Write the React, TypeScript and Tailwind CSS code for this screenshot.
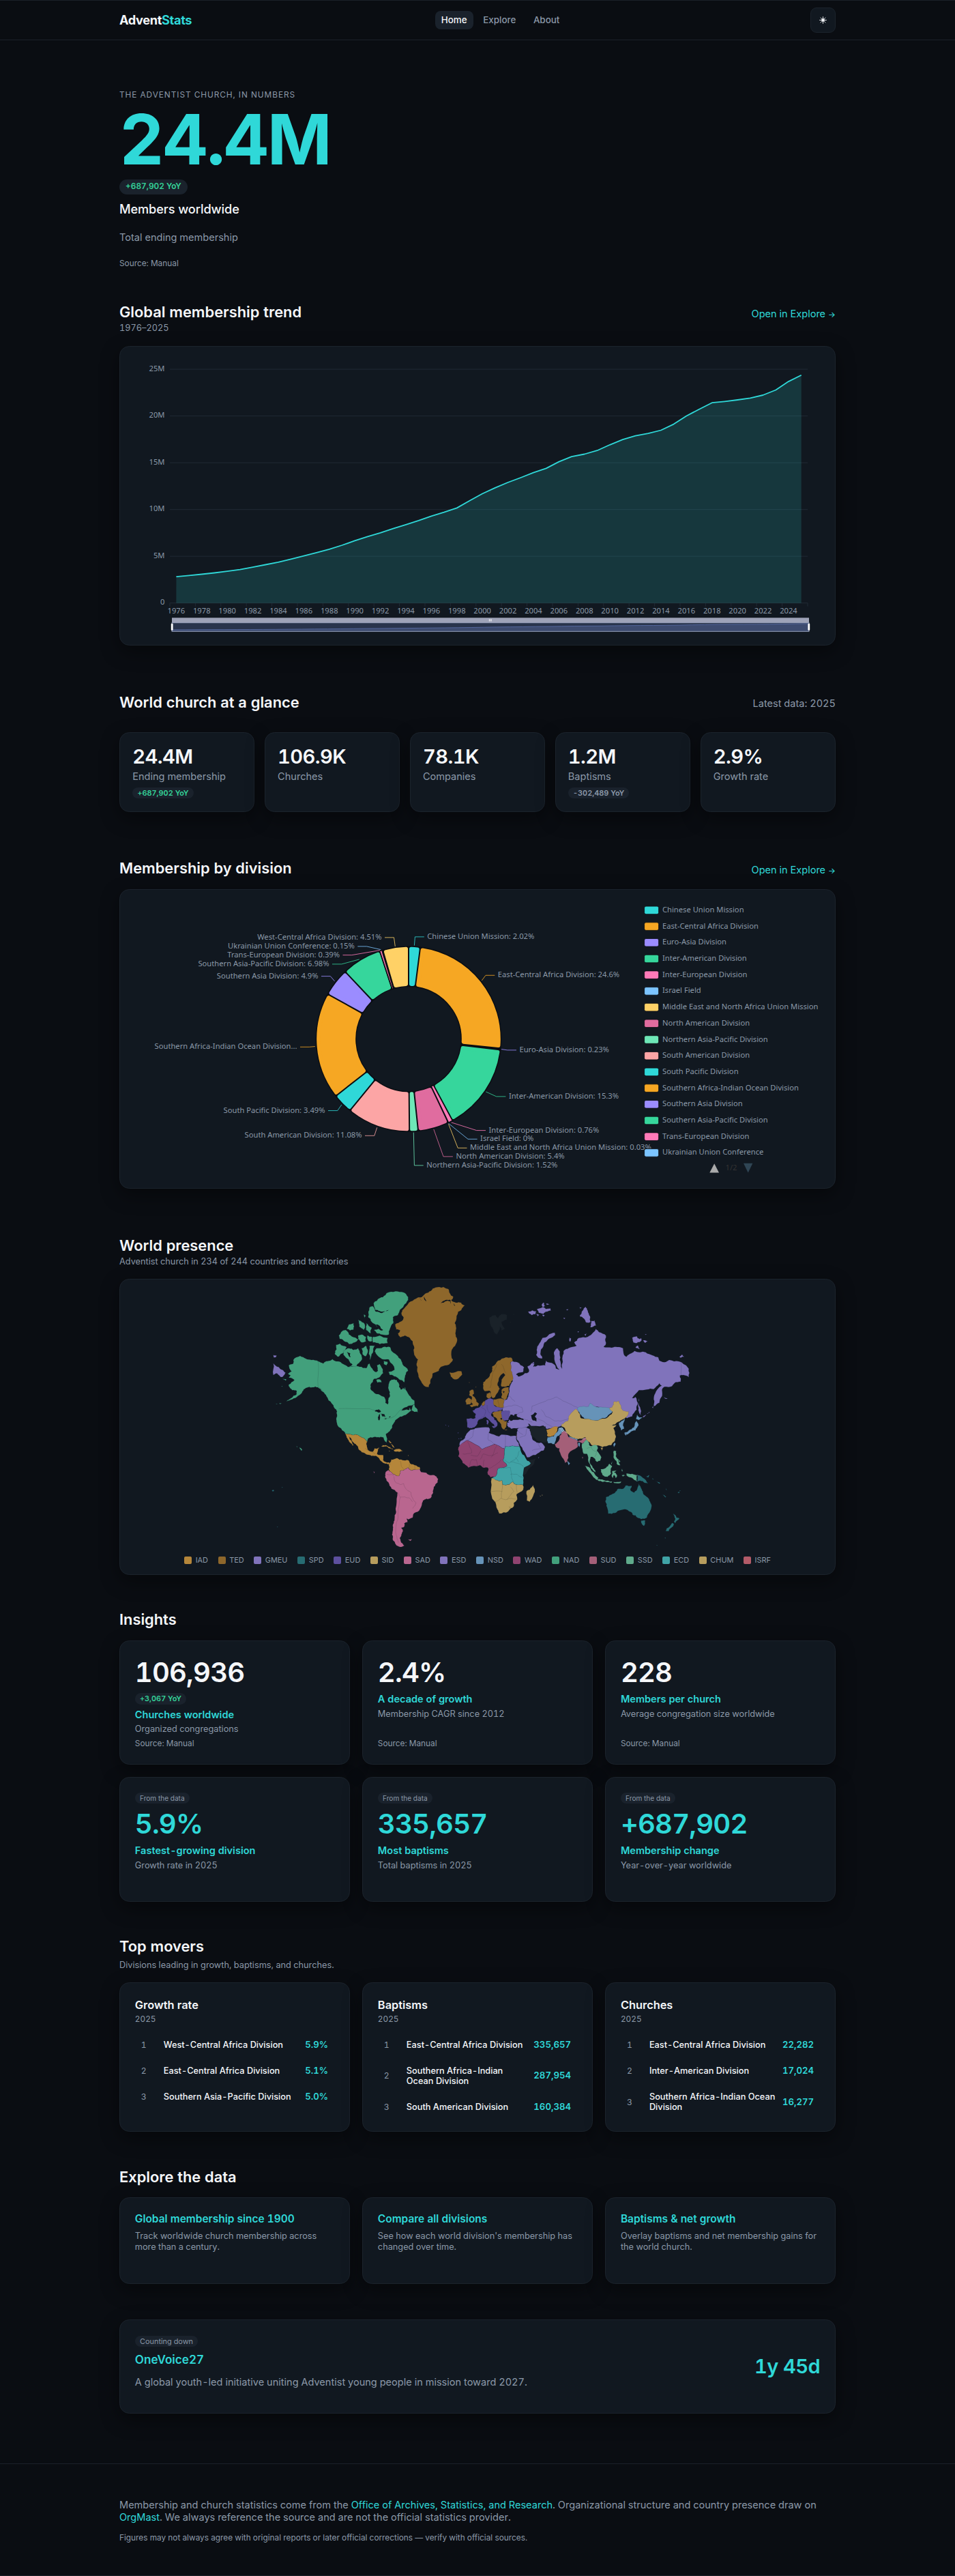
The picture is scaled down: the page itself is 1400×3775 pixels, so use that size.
import type { ReactNode } from "react";

const MUTED = "#8b98a8";

/* ---------- shared pieces ---------- */

const CARD =
  "rounded-[14.5px] border border-[#1b232c] bg-[#111820] shadow-[0_9px_28px_rgba(0,0,0,0.42)]";

function Title({ children }: { children: ReactNode }) {
  return <h2 className="h-7 text-[21.84px] leading-7 font-semibold text-[#f5f7fa]">{children}</h2>;
}

function ExploreLink() {
  return (
    <a className="text-[14.56px] leading-6 whitespace-nowrap text-[#2fd8d8]">
      Open in Explore <span className="text-[11.5px] font-medium">→</span>
    </a>
  );
}

function Delta({ text, up }: { text: string; up?: boolean }) {
  return (
    <span
      className={`inline-flex h-[16.6px] items-center self-start rounded-full bg-[#1a222c] px-[7.2px] text-[10.92px] leading-none font-semibold ${
        up ? "text-[#34d399]" : "text-[#8b98a8]"
      }`}
    >
      {text}
    </span>
  );
}

function Badge({ text, large }: { text: string; large?: boolean }) {
  return (
    <span
      className={`inline-flex h-[16.4px] items-center self-start rounded-full bg-[#1a222c] px-[7.2px] leading-none text-[#8b98a8] ${
        large ? "text-[10.92px]" : "text-[10.1px]"
      }`}
    >
      {text}
    </span>
  );
}

/* ---------- trend chart ---------- */

const MEMBERS = [
  2.82, 2.943, 3.08, 3.224, 3.39, 3.58, 3.83, 4.1, 4.37, 4.7, 5.038, 5.384, 5.757, 6.184, 6.661, 7.102, 7.498, 7.962,
  8.382, 8.812, 9.296, 9.702, 10.163, 10.939, 11.687, 12.32, 12.894, 13.406, 13.936, 14.399, 15.115, 15.66, 15.921,
  16.307, 16.923, 17.479, 17.881, 18.143, 18.479, 19.126, 20.008, 20.727, 21.414, 21.556, 21.723, 21.912, 22.234,
  22.785, 23.684, 24.37,
];
const BAND = 18.7;
const trendX = (i: number) => 249 + BAND * (i + 0.5);
const trendY = (v: number) => 884 - (v / 25) * 342.6;

function TrendChart() {
  const line = MEMBERS.map((v, i) => `${i ? "L" : "M"}${trendX(i).toFixed(1)} ${trendY(v).toFixed(1)}`).join("");
  const mini = MEMBERS.map((v, i) => `L${(252 + (934 * i) / 49).toFixed(1)} ${(924.4 - v * 0.42).toFixed(1)}`).join("");
  return (
    <svg className="-m-px block h-[439px] w-[1050px]" viewBox="175 507.3 1050 439" fontFamily="'Noto Sans', sans-serif" fontSize="11.2" fill={MUTED}>
      {[0, 5, 10, 15, 20, 25].map((v) => (
        <g key={v}>
          <line x1="249" x2="1184" y1={trendY(v)} y2={trendY(v)} stroke="#202a34" strokeWidth="1" />
          <text x="241.5" y={trendY(v) + 2.6} textAnchor="end">{v ? `${v}M` : "0"}</text>
        </g>
      ))}
      {Array.from({ length: 26 }, (_, i) => (
        <line key={i} x1={249 + i * 37.4} x2={249 + i * 37.4} y1="884" y2="889" stroke="#202a34" />
      ))}
      <path d={`${line}L${trendX(49)} 884L${trendX(0)} 884Z`} fill="#2fd8d8" fillOpacity="0.16" />
      <path d={line} fill="none" stroke="#2fd8d8" strokeWidth="1.8" strokeLinejoin="round" />
      {Array.from({ length: 25 }, (_, i) => (
        <text key={i} x={trendX(i * 2)} y="899.6" textAnchor="middle">{1976 + i * 2}</text>
      ))}
      <rect x="252" y="905.6" width="934" height="7.4" fill="#9ea3b8" />
      <path d="M717.3 907.6v3.2M718.8 907.6v3.2M720.3 907.6v3.2" stroke="#fff" strokeWidth="0.8" />
      <rect x="252" y="913" width="934" height="12.6" fill="#29344c" />
      <path d={`M252 925.4${mini}L1186 925.4Z`} fill="#3d4b6f" />
      <path d={mini.replace("L", "M")} fill="none" stroke="#53669b" strokeWidth="1" />
      <rect x="252" y="913" width="934" height="12.6" fill="none" stroke="#a4afca" strokeWidth="0.9" />
      <rect x="250.8" y="914" width="2.8" height="10" rx="1" fill="#fff" />
      <rect x="1184.4" y="914" width="2.8" height="10" rx="1" fill="#fff" />
    </svg>
  );
}

/* ---------- donut ---------- */

type Slice = {
  name: string;
  label: string;
  value: number;
  color: string;
  side: "l" | "r";
  line: [number, number][];
};

const SLICES: Slice[] = [
  { name: "Chinese Union Mission", label: "Chinese Union Mission: 2.02%", value: 2.02, color: "#2fd8d8", side: "r", line: [[607.4, 1386], [608.4, 1373.3], [621.8, 1373.3]] },
  { name: "East-Central Africa Division", label: "East-Central Africa Division: 24.6%", value: 24.6, color: "#f6a723", side: "r", line: [[706.3, 1437.3], [712, 1429.7], [725.3, 1429.7]] },
  { name: "Euro-Asia Division", label: "Euro-Asia Division: 0.23%", value: 0.23, color: "#9b8cff", side: "r", line: [[735, 1538], [743.8, 1539.3], [757, 1539.3]] },
  { name: "Inter-American Division", label: "Inter-American Division: 15.3%", value: 15.3, color: "#36d69c", side: "r", line: [[712.3, 1600.3], [727.7, 1607.3], [741.4, 1607.3]] },
  { name: "Inter-European Division", label: "Inter-European Division: 0.76%", value: 0.76, color: "#ff7ab8", side: "r", line: [[661.7, 1645.3], [698.6, 1657], [712, 1657]] },
  { name: "Israel Field", label: "Israel Field: 0%", value: 0, color: "#7cc4ff", side: "r", line: [[657.5, 1646.7], [686, 1669.7], [699.6, 1669.7]] },
  { name: "Middle East and North Africa Union Mission", label: "Middle East and North Africa Union Mission: 0.03%", value: 0.03, color: "#ffd166", side: "r", line: [[657.5, 1647.7], [671.2, 1682.7], [684.5, 1682.7]] },
  { name: "North American Division", label: "North American Division: 5.4%", value: 5.4, color: "#e06c9f", side: "r", line: [[635.8, 1655.3], [650, 1695.3], [663.9, 1695.3]] },
  { name: "Northern Asia-Pacific Division", label: "Northern Asia-Pacific Division: 1.52%", value: 1.52, color: "#6ee7b7", side: "r", line: [[606.3, 1660], [607.4, 1708.3], [620.7, 1708.3]] },
  { name: "South American Division", label: "South American Division: 11.08%", value: 11.08, color: "#fca5a5", side: "l", line: [[552.7, 1652.7], [548.8, 1664.7], [535, 1664.7]] },
  { name: "South Pacific Division", label: "South Pacific Division: 3.49%", value: 3.49, color: "#2fd8d8", side: "l", line: [[500.8, 1619.3], [494.8, 1628], [481, 1628]] },
  { name: "Southern Africa-Indian Ocean Division", label: "Southern Africa-Indian Ocean Division...", value: 18.64, color: "#f6a723", side: "l", line: [[461.8, 1534], [453.4, 1534.7], [440, 1534.7]] },
  { name: "Southern Asia Division", label: "Southern Asia Division: 4.9%", value: 4.9, color: "#9b8cff", side: "l", line: [[490.6, 1438.3], [484.3, 1431], [471, 1431]] },
  { name: "Southern Asia-Pacific Division", label: "Southern Asia-Pacific Division: 6.98%", value: 6.98, color: "#36d69c", side: "l", line: [[526.7, 1406.3], [500.8, 1413.3], [487, 1413.3]] },
  { name: "Trans-European Division", label: "Trans-European Division: 0.39%", value: 0.39, color: "#ff7ab8", side: "l", line: [[556.9, 1393], [515.8, 1400], [502.5, 1400]] },
  { name: "Ukrainian Union Conference", label: "Ukrainian Union Conference: 0.15%", value: 0.15, color: "#7cc4ff", side: "l", line: [[558.3, 1392], [537.6, 1387.3], [524.3, 1387.3]] },
  { name: "West-Central Africa Division", label: "West-Central Africa Division: 4.51%", value: 4.51, color: "#ffd166", side: "l", line: [[579.3, 1387.3], [577.5, 1374.3], [564, 1374.3]] },
];

const CX = 599;
const CY = 1523;
const R0 = 76.8;
const R1 = 135.8;

/** Ring sector from a0 to a1, pulled in by `d` on every side. */
function sector(a0: number, a1: number, d: number) {
  const p = (r: number, a: number) => `${(CX + r * Math.sin(a)).toFixed(2)} ${(CY - r * Math.cos(a)).toFixed(2)}`;
  const ri = R0 + d;
  const ro = R1 - d;
  const di = Math.asin(d / ri);
  const dx = Math.asin(d / ro);
  return `M${p(ri, a0 + di)}L${p(ro, a0 + dx)}A${ro} ${ro} 0 0 1 ${p(ro, a1 - dx)}L${p(ri, a1 - di)}A${ri} ${ri} 0 0 0 ${p(ri, a0 + di)}Z`;
}

function DonutChart() {
  let acc = 0;
  return (
    <svg className="-m-px block h-[438.7px] w-[1050px]" viewBox="175 1303.4 1050 438.7" fontFamily="'Noto Sans', sans-serif" fontSize="11.2" fill={MUTED}>
      <circle cx={CX} cy={CY} r={(R0 + R1) / 2} fill="none" stroke="#0a0d12" strokeWidth={R1 - R0 + 1} />
      {SLICES.map((s) => {
        const a0 = (acc / 100) * Math.PI * 2;
        acc += s.value;
        const a1 = (acc / 100) * Math.PI * 2;
        if (s.value < 0.3) return null;
        if (s.value < 1) return <path key={s.name} d={sector(a0, a1, 0)} fill={s.color} stroke="#0a0d12" strokeWidth="1.5" />;
        const half = (R0 * (a1 - a0)) / 2 - 1;
        const c = Math.min(2.8, half * 0.8);
        return <path key={s.name} d={sector(a0, a1, c + 1)} fill={s.color} stroke={s.color} strokeWidth={c * 2} strokeLinejoin="round" />;
      })}
      {SLICES.map((s) => {
        const end = s.line[2];
        return (
          <g key={s.name}>
            <polyline points={s.line.map((p) => p.join(",")).join(" ")} fill="none" stroke={s.color} strokeWidth="0.95" strokeOpacity="0.85" />
            <text x={end[0] + (s.side === "r" ? 4.5 : -4.5)} y={end[1] + 3} textAnchor={s.side === "r" ? "start" : "end"}>{s.label}</text>
          </g>
        );
      })}
      {SLICES.slice(0, 16).map((s, i) => (
        <g key={s.name}>
          <rect x="944.6" y={1328.5 + i * 23.7} width="21" height="11.6" rx="2.4" fill={s.color} stroke="#0a0d12" strokeWidth="0.8" />
          <text x="971" y={1337.4 + i * 23.7}>{s.name}</text>
        </g>
      ))}
      <path d="M1040.3 1718.8L1047.2 1705.6L1054 1718.8Z" fill="#aaa" />
      <text x="1072" y="1715.6" textAnchor="middle" fill="#333">1/2</text>
      <path d="M1090 1705.2L1103.4 1705.2L1096.7 1718.8Z" fill="#2f4554" />
    </svg>
  );
}

/* ---------- world map ---------- */

const C = {
  iad: "#b5863a", ted: "#8e672b", gmeu: "#8073bb", spd: "#276c72", eud: "#5d509e", sid: "#b79d5d", sad: "#b9668f",
  nsd: "#6693b8", wad: "#8f4370", nad: "#42a07c", sud: "#a45f78", ssd: "#5faa8b", ecd: "#40a3a6", none: "#1a2229",
  sea: "#111820",
};

/** Deterministic, direction-independent noise so shared borders stay glued together. */
function noise(ax: number, ay: number, bx: number, by: number) {
  const s = Math.sin((ax + bx) * 12.9898 + (ay + by) * 78.233) * 43758.5453;
  return (s - Math.floor(s)) * 2 - 1;
}

/** Coast line: midpoint displacement of a coarse outline. */
function coast(points: string, depth = 2, amp = 0.15, close = true) {
  let pts = points.trim().split(/\s+/).map((p) => p.split(",").map(Number));
  for (let k = 0; k < depth; k++) {
    const next: number[][] = [];
    for (let i = 0; i < pts.length; i++) {
      const a = pts[i];
      next.push(a);
      if (!close && i === pts.length - 1) break;
      const b = pts[(i + 1) % pts.length];
      const dx = b[0] - a[0];
      const dy = b[1] - a[1];
      if (Math.hypot(dx, dy) < 7) continue;
      const flip = a[0] < b[0] || (a[0] === b[0] && a[1] < b[1]) ? 1 : -1;
      const n = noise(a[0], a[1], b[0], b[1]) * amp * flip * Math.min(1, 22 / Math.hypot(dx, dy));
      next.push([(a[0] + b[0]) / 2 - dy * n, (a[1] + b[1]) / 2 + dx * n]);
    }
    pts = next;
  }
  return "M" + pts.map((p) => `${p[0].toFixed(1)} ${p[1].toFixed(1)}`).join("L") + (close ? "Z" : "");
}

type Land = [string, string[]];

const AMERICAS: Land[] = [
  [C.nad, [
    "155,462 172,452 160,425 180,418 180,402 210,384 235,396 260,402 290,408 312,418 330,407 352,398 375,408 400,420 420,432 450,430 480,432 500,438 508,422 516,418 528,440 545,455 552,450 548,425 560,420 572,440 575,460 555,480 535,485 520,510 520,530 535,545 560,555 580,565 585,590 595,597 597,580 605,560 603,540 598,520 602,500 612,488 635,490 650,515 668,532 672,520 690,558 712,580 712,598 700,602 680,608 660,618 655,625 670,622 690,612 700,625 685,635 668,645 645,655 635,662 625,675 615,690 612,705 600,718 587,728 592,755 590,766 578,750 575,742 555,742 540,740 520,742 508,748 505,762 490,745 480,742 465,732 440,732 408,726 395,712 385,700 372,680 370,655 372,628 360,612 350,595 335,580 325,560 315,545 300,530 288,522 265,522 250,520 235,525 220,540 200,560 175,575 150,584 170,570 195,552 195,538 175,535 165,525 160,510 185,490 160,480 168,470",
    "700,622 706,600 713,598 716,610 725,618 728,632 712,630",
    "545,350 575,345 605,345 615,365 640,385 655,405 660,420 685,450 672,470 668,500 650,490 630,475 605,468 598,455 625,445 615,420 600,400 570,398 548,380 538,365",
    "400,360 425,350 445,358 465,350 475,375 482,400 470,415 455,432 418,432 440,422 425,405 410,390 400,378",
    "368,335 385,330 415,345 400,370 390,375 378,388 362,375 370,355",
    "480,350 500,340 508,360 500,385 485,378", "515,340 538,338 530,370 518,402 512,375",
    "380,295 395,275 410,270 425,290 440,300 465,312 450,325 425,332 405,320 385,310",
    "465,295 480,290 500,300 500,320 480,325 465,310", "465,225 488,238 495,255 490,270 470,255",
    "415,265 425,245 445,240 445,268 430,272", "502,240 525,260 520,285 500,270",
    "530,300 560,295 595,305 595,328 560,332 530,325", "505,295 525,300 525,320 510,318",
    "533,152 560,130 575,125 590,108 630,100 665,105 685,125 685,138 665,165 650,180 640,205 618,215 620,240 605,265 600,290 570,290 548,285 535,270 555,265 540,245 525,235 510,215 510,195 515,170 528,165 540,180",
    "490,202 498,208 495,218", "545,490 562,488 568,500 550,502", "578,405 595,410 590,425 578,420",
    "207,786 214,790 220,798 214,800", "194,781 198,783 196,786", "103,593 112,595 106,597", "118,591 130,593 122,596", "132,485 150,488 146,493", "128,516 133,518 130,520",
  ]],
  [C.gmeu, ["92,417 115,433 130,445 146,458 135,475 125,477 110,462 92,468", "92,380 106,382 103,390 93,390"]],
  [C.iad, [
    "408,726 440,732 465,732 480,742 490,745 505,762 504,785 512,800 530,805 538,790 558,786 552,802 548,815 575,820 575,840 585,850 600,852 606,862 595,860 585,858 570,850 555,832 535,824 515,820 495,812 470,798 462,780 445,765 432,745 422,735 430,752 446,777 440,778 424,758 414,742",
    "566,782 585,776 605,785 620,793 600,790 585,782", "622,797 640,793 662,802 645,806 625,804", "598,755 612,768 608,768", "610,770 626,788 620,786", "600,800 610,802 602,804", "684,820 688,822 685,824",
    "600,860 610,840 636,833 660,842 685,842 695,858 715,865 735,872 738,882 700,888 685,875 670,882 650,890 645,912 625,905 605,892 600,880",
  ]],
  [C.sad, [
    "598,885 605,892 625,905 645,912 650,890 670,882 685,875 700,888 735,882 742,895 765,898 775,906 800,908 817,925 815,940 798,960 795,985 785,1008 765,1012 750,1020 745,1040 725,1070 708,1080 705,1095 685,1103 678,1100 682,1115 668,1120 668,1135 655,1140 662,1155 655,1170 648,1185 655,1205 668,1218 650,1224 630,1212 618,1195 614,1170 618,1150 618,1125 625,1100 632,1070 633,1040 638,985 612,968 598,940 585,920 585,900",
    "685,1190 702,1190 696,1198", "532,892 538,896 535,900",
  ]],
  [C.ted, [
    "628,245 655,232 665,215 655,195 668,175 688,150 720,132 745,125 760,110 785,98 805,83 840,81 862,90 868,108 884,125 875,140 895,150 918,150 934,162 920,180 905,190 898,215 890,240 895,270 895,300 900,320 885,345 875,370 882,400 865,422 830,432 820,450 792,462 785,485 775,522 755,515 738,490 728,460 722,425 728,400 712,380 712,350 705,320 690,303 670,295 650,302 640,285 650,272 632,268",
  ]],
  [C.spd, ["86,975 94,973 95,978 87,979", "129,960 134,962 131,964", "108,1134 113,1136 110,1138"]],
  [C.eud, ["848,686 853,688 850,690", "861,691 865,693 862,695", "903,720 907,722 904,725", "906,746 911,748 907,750", "916,744 921,747 917,749"]],
];

const EURO_AFRICA: Land[] = [
  [C.ted, [
    "118,95 130,98 150,92 170,92 173,106 150,127 130,122 122,108",
    "265,140 290,118 305,90 305,70 330,45 365,30 390,32 395,45 385,52 388,80 392,100 395,130 380,155 362,160 345,158 345,140 352,120 362,108 355,100 343,108 333,130 328,150 338,168 325,190 318,205 308,210 300,200 297,180 285,178 270,178 265,160",
    "280,190 295,182 300,205 290,212 280,205", "348,170 378,162 378,185 368,212 358,218 345,208 345,185",
    "205,178 220,172 225,190 218,195 230,210 235,225 247,235 243,245 215,250 205,242 220,236 210,222 215,205 203,195",
    "187,222 200,208 212,215 210,235 190,238", "310,215 350,212 358,222 355,250 335,252 310,240", "258,235 272,222 274,237 262,245",
    "305,275 325,265 345,262 350,290 355,308 370,312 368,325 358,348 347,340 340,320 330,310 325,300 310,290", "355,345 372,348 362,350",
    "202,139 206,141 204,143", "232,158 235,160 233,164",
  ]],
  [C.eud, [
    "232,255 250,248 258,238 262,245 272,238 275,218 290,212 310,215 312,240 335,250 355,252 345,265 325,268 305,272 300,285 315,305 328,318 328,326 318,340 312,325 285,300 275,292 262,300 245,305 240,315 235,330 215,342 195,338 192,300 230,298 232,280 218,265",
    "302,333 318,332 315,342", "280,305 288,308 286,326 280,322", "345,265 380,265 382,285 376,305 355,308 346,290",
  ]],
  [C.gmeu, [
    "210,348 230,342 290,338 295,345 290,362 335,378 345,370 400,375 412,378 412,395 425,422 362,422 360,432 315,412 260,435 195,395 178,405 160,425 165,400 185,385 190,370",
    "415,345 455,338 470,345 475,370 485,395 500,405 520,405 537,425 530,440 495,460 458,470 445,445 425,410 412,388 412,375",
    "506,470 512,470 508,473",
  ]],
  [C.none, ["463,322 480,335 510,340 540,335 548,365 545,405 520,402 500,395 480,375", "497,475 490,495 460,530 445,550 445,515 475,495 460,480"]],
  [C.wad, ["155,428 178,405 195,395 260,435 315,412 360,432 358,460 352,480 370,508 350,515 330,520 318,555 298,558 285,545 288,525 285,515 265,515 250,505 200,515 175,495 155,465 158,445"]],
  [C.ecd, ["360,432 362,422 425,422 430,440 450,470 460,485 475,495 445,515 440,550 440,592 410,590 395,578 380,590 350,590 348,572 320,570 300,562 318,555 330,520 350,515 370,508 352,480 358,460"]],
  [C.sid, [
    "302,562 320,570 348,572 350,590 380,590 395,578 410,590 440,592 442,610 412,632 415,655 400,670 400,685 375,708 335,717 328,700 312,660 298,620",
    "485,592 492,610 480,650 470,665 457,660 455,620 470,612", "514,638 519,640 516,642", "523,634 527,636 524,639",
  ]],
  [C.sud, ["410,369 413,372 412,383 410,378"]],
];

const ASIA: Land[] = [
  [C.gmeu, [
    "150,405 175,412 205,435 200,455 180,458 170,465 180,475 195,470 225,455 220,430 240,415 250,420 245,432 265,425 298,425 300,405 335,420 345,440 360,445 338,400 336,368 350,350 362,365 362,400 372,440 375,380 380,360 400,350 435,340 425,325 445,305 485,300 510,280 520,265 535,280 565,295 565,325 555,345 590,348 615,345 640,350 645,380 655,388 670,375 690,362 740,368 770,382 795,390 800,405 830,410 845,402 885,408 925,435 929,440 929,478 905,468 890,470 893,498 870,500 848,520 815,525 812,560 800,590 775,605 775,575 785,540 810,515 800,505 775,530 745,532 710,535 680,570 695,565 705,590 700,620 680,650 658,658 640,650 600,620 500,610 440,630 400,670 370,690 350,705 335,698 305,706 290,690 225,692 215,698 205,700 170,703 150,705 132,695 130,680 140,665 140,640 110,625 115,590 100,572 130,575 138,550 140,525 145,510 155,495 145,470 145,440",
    "258,380 262,350 275,325 285,305 310,295 340,282 342,292 315,308 295,325 280,355 278,380 285,395 265,390",
    "222,190 240,184 258,188 255,200 238,205 228,198", "262,178 285,170 300,178 320,175 322,185 300,190 290,200 270,195", "282,160 292,150 296,165 288,170", "302,154 316,158 306,160", "258,200 272,203 264,210", "284,203 296,206 290,211",
    "450,205 462,185 475,168 485,185 495,210 497,235 480,238 468,220 452,212", "496,258 500,230 515,228 522,250", "448,170 458,172 452,176", "390,180 400,179 394,184", "378,216 386,218 382,222", "440,276 446,276 443,282", "404,304 412,308 406,322", "470,290 480,286 476,296",
    "680,305 700,298 712,310 720,305 722,315 715,322 700,328 685,325", "695,348 705,338 714,354", "728,316 748,320 738,327", "736,288 744,288 740,292", "888,388 900,378 909,388 895,392",
    "708,570 715,610 718,645 710,630 706,600", "820,565 836,571 826,572", "725,655 740,643 742,645", "745,640 756,630 757,633", "768,610 774,606 772,614", "240,414 248,410 250,420",
  ]],
  [C.none, ["52,215 80,205 90,218 105,200 130,205 130,225 105,235 120,265 105,272 98,255 85,290 70,270 58,250", "155,200 165,198 160,204", "138,236 148,235 144,239"]],
  [C.nsd, [
    "440,612 465,605 490,605 495,592 515,605 550,610 595,615 592,632 560,658 520,668 470,660 450,640",
    "308,742 335,738 355,712 358,700 375,700 380,722 358,735 350,738 338,772 310,768 305,755",
    "400,735 440,748 440,757 405,748", "443,765 452,768 450,785 444,780", "397,845 407,855 400,865",
    "622,678 640,668 648,660 640,690 645,705 632,712 625,695",
    "703,642 712,655 725,655 710,666 698,662", "700,670 708,690 695,712 670,722 650,732 646,722 665,712 688,698 692,680", "646,720 656,725 652,736", "602,766 607,768 600,785 597,775",
  ]],
  [C.iad, ["303,708 330,698 355,695 350,715 338,732 320,740 305,735"]],
  [C.sud, [
    "370,720 385,715 400,740 440,758 460,752 478,742 482,755 460,770 455,765 440,762 440,785 400,815 395,850 385,855 372,830 360,790 345,785 340,772 358,755", "460,828 464,828 462,838",
  ]],
  [C.sid, [
    "370,685 398,670 400,655 418,630 435,618 450,640 455,658 520,668 560,660 590,640 595,630 580,615 592,610 600,585 622,583 632,605 640,625 665,628 658,650 635,665 615,676 592,690 612,688 598,702 608,735 605,755 590,775 570,780 550,785 525,778 500,775 480,755 475,742 450,748 425,745 405,735 390,720 385,705 370,695",
    "540,788 552,788 546,802",
  ]],
  [C.ssd, [
    "460,770 480,752 490,765 495,780 525,778 530,790 525,800 545,830 540,845 525,850 515,835 498,828 496,858 512,880 520,896 508,888 495,865 488,850 482,815 468,815 460,790",
    "600,800 610,802 608,825 620,838 628,865 612,858 610,845 598,828", "622,840 628,848 624,852", "592,850 598,846 588,862",
    "542,882 565,876 580,858 592,868 586,885 588,900 572,916 550,908 543,895", "472,866 490,872 512,896 532,920 528,930 510,918 492,895",
    "528,926 555,930 592,936 588,942 550,938 530,932", "598,938 632,936 630,942 600,943", "592,890 616,886 600,896 614,908 608,922 600,908 596,922 590,912",
    "655,900 680,902 702,908 702,937 690,930 672,918 655,908", "636,880 640,892 634,890", "634,908 650,910 640,914",
  ]],
  [C.spd, [
    "701,906 725,918 740,930 750,945 735,942 715,932 702,937", "740,914 756,908 752,918", "768,922 776,928 770,926", "782,932 804,944 800,946", "828,964 833,974 829,972", "814,995 830,1004 826,1006", "880,984 888,980 886,988", "888,976 894,976 890,979",
    "565,1005 585,995 605,985 618,968 640,968 650,955 678,955 672,972 690,985 700,975 708,945 722,970 730,992 755,1015 764,1035 760,1065 745,1095 720,1102 695,1085 682,1082 675,1070 655,1060 630,1062 605,1075 575,1078 570,1050 562,1022",
    "720,1108 738,1108 732,1132 724,1125", "860,1077 875,1095 888,1098 870,1120 864,1112 870,1100", "856,1118 864,1122 840,1155 828,1155 832,1142", "824,1182 828,1184 825,1187", "787,1215 792,1217 789,1219",
  ]],
];

const SEAS: Record<string, string[]> = {
  americas: [
    "538,627 556,619 566,630 552,632", "556,643 562,640 558,668 553,664", "568,638 580,640 585,652 572,650", "575,662 592,655 588,662", "600,652 610,650 604,655",
    "535,178 545,190 570,196 600,182 570,190 550,182", "540,245 560,252 575,270 565,272", "415,365 430,372 432,390 424,385",
    "735,125 748,145 742,140", "828,152 850,138 872,138 872,155 868,143 852,143", "884,150 892,165 886,160",
    "755,122 765,146 760,140", "650,505 664,525 652,532 645,520", "672,618 690,612 690,622",
  ],
  euroAfrica: [
    "376,300 385,282 400,288 405,280 415,280 412,288 440,300 443,307 410,305 385,310", "475,285 492,272 502,278 492,290 500,300 500,312 485,308 478,298",
    "340,298 348,298 345,306", "352,178 360,180 355,188", "320,268 345,262 345,264", "372,316 382,314 376,318", "366,335 374,333 376,345 368,343",
  ],
};

const BORDERS: Record<string, string[]> = {
  americas: [
    "289,408 289,520 312,540", "380,616 515,616 545,625 570,638 585,662 620,652 650,622 680,612", "622,915 628,938 650,950 665,945 672,965 698,985 705,1010 720,1030 705,1055",
    "640,985 650,1008 645,1040 640,1080 632,1130 632,1170 642,1205", "650,1005 690,1008 705,1025", "590,905 610,905 622,912", "650,845 655,870 665,880", "690,858 690,885", "715,866 715,885", "495,790 540,815",
  ],
  euroAfrica: [
    "195,395 220,375 225,345", "290,362 288,395 315,412", "362,372 362,422", "300,280 285,262 282,240", "250,300 270,290 275,262 255,250",
    "195,400 215,450 175,455", "210,460 240,465 255,440", "205,510 215,480 235,480 240,510", "250,480 265,455 300,462 330,450", "265,512 270,480", "290,520 330,495 345,480", "300,470 325,420",
    "355,480 380,495 410,475 425,440", "385,515 390,560 400,580", "385,490 430,500 445,515", "385,545 415,545 440,560", "405,470 420,490", "350,520 385,515",
    "300,620 348,620 350,590", "348,620 345,650 318,665", "345,650 370,655 400,620 385,600", "370,655 390,650 412,655", "378,685 385,690 378,694", "410,590 415,625", "460,340 450,375 425,385", "500,405 520,430 480,440", "415,350 440,370",
    "325,60 305,110 295,165", "345,60 365,100", "358,222 380,200 405,225", "355,250 400,240 435,250 440,270 415,280", "475,270 480,245 520,230 560,215 590,205 625,225 680,250", "520,260 540,290 580,310 610,310 640,300", "505,300 540,320 570,335", "440,300 480,315", "330,215 335,250",
  ],
  asia: ["895,410 895,470", "700,905 702,937", "500,780 510,800 525,805 515,830", "480,790 500,785"],
};

function Lands({ lands }: { lands: Land[] }) {
  return (
    <>
      {lands.map(([color, shapes], i) => (
        <path key={i} d={shapes.map((s) => coast(s)).join("")} fill={color} stroke={color === C.none ? C.none : "#1b2a3a"} strokeOpacity="0.4" strokeWidth="1" strokeLinejoin="round" />
      ))}
    </>
  );
}

function Lines({ lines }: { lines: string[] }) {
  return <path d={lines.map((l) => coast(l, 2, 0.12, false)).join("")} fill="none" stroke="#0b1118" strokeOpacity="0.2" strokeWidth="2" />;
}

function Seas({ shapes }: { shapes: string[] }) {
  return <path d={shapes.map((s) => coast(s)).join("")} fill={C.sea} />;
}

function WorldMap() {
  return (
    <svg className="-mx-px -mt-px block h-[400px] w-[1050px]" viewBox="-585 45 3150 1200">
      <g>
        <Lands lands={AMERICAS} />
        <Seas shapes={SEAS.americas} />
        <Lines lines={BORDERS.americas} />
      </g>
      <g transform="translate(990 0)">
        <Lands lands={ASIA} />
        <Lines lines={BORDERS.asia} />
        <path d="M362 702l14 16M370 700l12 14M378 712l14 10M463 750l6 -4M470 750l6 -5" stroke="#e8dfe8" strokeWidth="2.4" strokeDasharray="5 3" />
      </g>
      <g transform="translate(750 360)">
        <Lands lands={EURO_AFRICA} />
        <Seas shapes={SEAS.euroAfrica} />
        <Lines lines={BORDERS.euroAfrica} />
      </g>
    </svg>
  );
}

const MAP_LEGEND: [string, string][] = [
  ["IAD", "bg-[#b5863a]"], ["TED", "bg-[#8e672b]"], ["GMEU", "bg-[#8073bb]"], ["SPD", "bg-[#276c72]"], ["EUD", "bg-[#5d509e]"],
  ["SID", "bg-[#b79d5d]"], ["SAD", "bg-[#b9668f]"], ["ESD", "bg-[#8073bb]"], ["NSD", "bg-[#6693b8]"], ["WAD", "bg-[#8f4370]"],
  ["NAD", "bg-[#42a07c]"], ["SUD", "bg-[#a45f78]"], ["SSD", "bg-[#5faa8b]"], ["ECD", "bg-[#40a3a6]"], ["CHUM", "bg-[#b79d5d]"], ["ISRF", "bg-[#b35b68]"],
];

/* ---------- content data ---------- */

const GLANCE: { value: string; label: string; delta?: string; up?: boolean }[] = [
  { value: "24.4M", label: "Ending membership", delta: "+687,902 YoY", up: true },
  { value: "106.9K", label: "Churches" },
  { value: "78.1K", label: "Companies" },
  { value: "1.2M", label: "Baptisms", delta: "-302,489 YoY" },
  { value: "2.9%", label: "Growth rate" },
];

const INSIGHTS: { value: string; title: string; text: string; delta?: string }[] = [
  { value: "106,936", title: "Churches worldwide", text: "Organized congregations", delta: "+3,067 YoY" },
  { value: "2.4%", title: "A decade of growth", text: "Membership CAGR since 2012" },
  { value: "228", title: "Members per church", text: "Average congregation size worldwide" },
];

const DATA_INSIGHTS = [
  { value: "5.9%", title: "Fastest-growing division", text: "Growth rate in 2025" },
  { value: "335,657", title: "Most baptisms", text: "Total baptisms in 2025" },
  { value: "+687,902", title: "Membership change", text: "Year-over-year worldwide" },
];

const MOVERS: { title: string; rows: [string[], string][] }[] = [
  { title: "Growth rate", rows: [[["West-Central Africa Division"], "5.9%"], [["East-Central Africa Division"], "5.1%"], [["Southern Asia-Pacific Division"], "5.0%"]] },
  { title: "Baptisms", rows: [[["East-Central Africa Division"], "335,657"], [["Southern Africa-Indian", "Ocean Division"], "287,954"], [["South American Division"], "160,384"]] },
  { title: "Churches", rows: [[["East-Central Africa Division"], "22,282"], [["Inter-American Division"], "17,024"], [["Southern Africa-Indian Ocean", "Division"], "16,277"]] },
];

const EXPLORE = [
  ["Global membership since 1900", "Track worldwide church membership across", "more than a century."],
  ["Compare all divisions", "See how each world division's membership has", "changed over time."],
  ["Baptisms & net growth", "Overlay baptisms and net membership gains for", "the world church."],
];

export default function App() {
  return (
    <div className="h-[3775px] overflow-hidden border-y border-[#1a2028] bg-[#0a0d12] font-[Inter,sans-serif] text-[#f5f7fa] tabular-nums">
      <header className="h-[58px] border-b border-[#1b2129]">
        <div className="mx-auto flex h-full w-[1050px] items-center justify-between">
          <div className="text-[18.2px] font-bold tracking-[-0.02em]">
            Advent<span className="text-[#2fd8d8]">Stats</span>
          </div>
          <nav className="flex gap-[3.6px] text-[13.4px] font-medium text-[#8b98a8]">
            <a className="flex h-[27.6px] items-center rounded-[8px] bg-[#1a222c] px-[9px] text-[#f5f7fa]">Home</a>
            <a className="flex h-[27.6px] items-center px-[11px]">Explore</a>
            <a className="flex h-[27.6px] items-center px-[11px]">About</a>
          </nav>
          <button className="flex size-[37px] items-center justify-center rounded-[9px] border border-[#1b232c] bg-[#111820]">
            <svg className="size-[11px]" viewBox="0 0 11 11" stroke="#f5f7fa" strokeWidth="0.9" strokeLinecap="round">
              <circle cx="5.5" cy="5.5" r="2.4" fill="#f5f7fa" stroke="none" />
              <path d="M5.5 0.6v2M5.5 8.4v2M0.6 5.5h2M8.4 5.5h2M2 2l1.4 1.4M7.6 7.6L9 9M9 2L7.6 3.4M3.4 7.6L2 9" />
            </svg>
          </button>
        </div>
      </header>

      <main className="mx-auto w-[1050px]">
        <section className="flex flex-col pt-[71px]">
          <p className="h-[18px] text-[11.83px] leading-[18px] tracking-[0.08em] text-[#8b98a8] uppercase">The Adventist Church, in numbers</p>
          <p className="mt-[5px] h-[102px] text-[101.92px] leading-[102px] font-bold tracking-[-0.02em] text-[#2fd8d8]">24.4M</p>
          <span className="mt-2 flex h-[21.5px] items-center self-start rounded-full bg-[#1a222c] px-[9.1px] text-[11.83px] leading-none font-semibold text-[#34d399]">+687,902 YoY</span>
          <p className="mt-[9.7px] h-6 text-[18.2px] leading-6 font-medium tracking-[-0.006em]">Members worldwide</p>
          <p className="mt-[18px] h-6 text-[14.56px] leading-6 text-[#8b98a8]">Total ending membership</p>
          <p className="mt-[15.5px] h-5 text-[11.83px] leading-5 text-[#8b98a8]">Source: Manual</p>
        </section>

        <section className="mt-[47.5px]">
          <div className="flex items-center justify-between">
            <div>
              <Title>Global membership trend</Title>
              <p className="mt-px h-[18px] text-[12.74px] leading-[18px] text-[#8b98a8]">1976–2025</p>
            </div>
            <div className="-mt-[14px]"><ExploreLink /></div>
          </div>
          <div className={`mt-[16.5px] h-[439px] ${CARD}`}>
            <TrendChart />
          </div>
        </section>

        <section className="mt-[69px]">
          <div className="flex h-7 items-center justify-between">
            <Title>World church at a glance</Title>
            <p className="mt-1 h-6 text-[14.56px] leading-6 text-[#8b98a8]">Latest data: 2025</p>
          </div>
          <div className="mt-[30px] grid grid-cols-5 gap-[14.4px]">
            {GLANCE.map((g) => (
              <div key={g.label} className={`flex h-[117.2px] flex-col px-[18.2px] pt-5 ${CARD}`}>
                <p className="h-[30px] text-[29.12px] leading-[30px] font-semibold tracking-[-0.02em]">{g.value}</p>
                <p className="mt-[4.4px] mb-[5.6px] h-5 text-[14.56px] leading-5 text-[#8b98a8]">{g.label}</p>
                {g.delta && <Delta text={g.delta} up={g.up} />}
              </div>
            ))}
          </div>
        </section>

        <section className="mt-[68.3px]">
          <div className="flex h-7 items-center justify-between">
            <Title>Membership by division</Title>
            <div className="mt-1.5"><ExploreLink /></div>
          </div>
          <div className={`mt-[16.7px] h-[438.7px] ${CARD}`}>
            <DonutChart />
          </div>
        </section>

        <section className="mt-[69.2px]">
          <Title>World presence</Title>
          <p className="mt-[1.2px] h-[18px] text-[12.74px] leading-[18px] text-[#8b98a8]">Adventist church in 234 of 244 countries and territories</p>
          <div className={`mt-[16.5px] h-[434px] ${CARD}`}>
            <WorldMap />
            <ul className="mt-[5px] flex h-[14px] items-center justify-center gap-[14.6px] text-[10.92px] leading-[14px] text-[#8b98a8]">
              {MAP_LEGEND.map(([name, bg]) => (
                <li key={name} className="flex items-center gap-[5.6px]">
                  <span className={`size-[11px] rounded-[2px] ${bg}`} />
                  {name}
                </li>
              ))}
            </ul>
          </div>
        </section>

        <section className="mt-[50.3px]">
          <Title>Insights</Title>
          <div className="mt-[17.2px] grid grid-cols-3 gap-[18.2px]">
            {INSIGHTS.map((c) => (
              <div key={c.title} className={`flex h-[182px] flex-col px-[21.8px] pt-[26px] pb-[21.6px] ${CARD}`}>
                <p className="h-10 text-[40.04px] leading-10 font-semibold tracking-[-0.02em]">{c.value}</p>
                <div className={c.delta ? "mt-2.5 mb-1.5 flex" : "mt-2.5"}>{c.delta && <Delta text={c.delta} up />}</div>
                <p className="h-[18px] text-[14.56px] leading-[18px] font-semibold text-[#2fd8d8]">{c.title}</p>
                <p className="mt-[3.8px] h-[18px] text-[12.74px] leading-[18px] text-[#8b98a8]">{c.text}</p>
                <p className="mt-auto h-4 text-[11.83px] leading-4 text-[#8b98a8]">Source: Manual</p>
              </div>
            ))}
            {DATA_INSIGHTS.map((c) => (
              <div key={c.title} className={`flex h-[183px] flex-col px-[21.8px] pt-[21.8px] ${CARD}`}>
                <Badge text="From the data" />
                <p className="mt-[9.3px] h-10 text-[40.04px] leading-10 font-semibold tracking-[-0.02em] text-[#2fd8d8]">{c.value}</p>
                <p className="mt-2.5 h-[18px] text-[14.56px] leading-[18px] font-semibold text-[#2fd8d8]">{c.title}</p>
                <p className="mt-[4.2px] h-[18px] text-[12.74px] leading-[18px] text-[#8b98a8]">{c.text}</p>
              </div>
            ))}
          </div>
        </section>

        <section className="mt-[50.5px]">
          <Title>Top movers</Title>
          <p className="mt-[5.1px] h-[18px] text-[12.74px] leading-[18px] text-[#8b98a8]">Divisions leading in growth, baptisms, and churches.</p>
          <div className="mt-[16.3px] grid grid-cols-3 gap-[18.2px]">
            {MOVERS.map((m) => (
              <div key={m.title} className={`h-[219.4px] px-[21.8px] pt-[22.1px] ${CARD}`}>
                <h3 className="h-5 text-[16.38px] leading-5 font-semibold">{m.title}</h3>
                <p className="mt-[2.6px] h-4 text-[11.83px] leading-4 text-[#8b98a8]">2025</p>
                <ol className="mt-[10.5px]">
                  {m.rows.map(([name, value], i) => (
                    <li key={i} className="flex items-center py-[11.45px] pr-[9.1px]">
                      <span className="w-[42px] pl-[9px] text-[12.2px] leading-[15.3px] text-[#8b98a8]">{i + 1}</span>
                      <span className="flex-1 text-[12.74px] leading-[15.3px] font-medium whitespace-nowrap">
                        {name.map((n) => <span key={n} className="block">{n}</span>)}
                      </span>
                      <span className="text-[13.2px] leading-[15.3px] font-semibold text-[#2fd8d8]">{value}</span>
                    </li>
                  ))}
                </ol>
              </div>
            ))}
          </div>
        </section>

        <section className="mt-[51.2px]">
          <Title>Explore the data</Title>
          <div className="mt-[16.2px] grid grid-cols-3 gap-[18.2px]">
            {EXPLORE.map(([title, a, b]) => (
              <div key={title} className={`h-[127.4px] px-[21.8px] pt-[21.3px] ${CARD}`}>
                <h3 className="h-5 text-[15.47px] leading-5 font-semibold text-[#2fd8d8]">{title}</h3>
                <p className="mt-[7.4px] text-[12.74px] leading-[15.3px] whitespace-nowrap text-[#8b98a8]">{a}<br />{b}</p>
              </div>
            ))}
          </div>
        </section>

        <section className={`mt-[51.4px] flex h-[138.4px] items-center justify-between px-[21.8px] ${CARD}`}>
          <div className="flex h-full flex-col pt-[23.3px]">
            <Badge text="Counting down" large />
            <h3 className="mt-[8.6px] h-5 text-[17.1px] leading-5 font-semibold text-[#2fd8d8]">OneVoice27</h3>
            <p className="mt-[13.5px] h-5 text-[14.56px] leading-5 text-[#8b98a8]">A global youth-led initiative uniting Adventist young people in mission toward 2027.</p>
          </div>
          <p className="text-[29.12px] leading-8 font-semibold tracking-[-0.02em] text-[#2fd8d8]">1y 45d</p>
        </section>
      </main>

      <footer className="mt-[72.6px] border-t border-[#1b2129] pt-[51px]">
        <div className="mx-auto w-[1050px] text-[#8b98a8]">
          <p className="text-[14.56px] leading-[18px]">
            Membership and church statistics come from the <a className="text-[#2fd8d8]">Office of Archives, Statistics, and Research</a>. Organizational structure and country presence draw on <a className="text-[#2fd8d8]">OrgMast</a>. We always reference the source and are not the official statistics provider.
          </p>
          <p className="mt-3 text-[11.83px] leading-[18px]">Figures may not always agree with original reports or later official corrections — verify with official sources.</p>
        </div>
      </footer>
    </div>
  );
}
